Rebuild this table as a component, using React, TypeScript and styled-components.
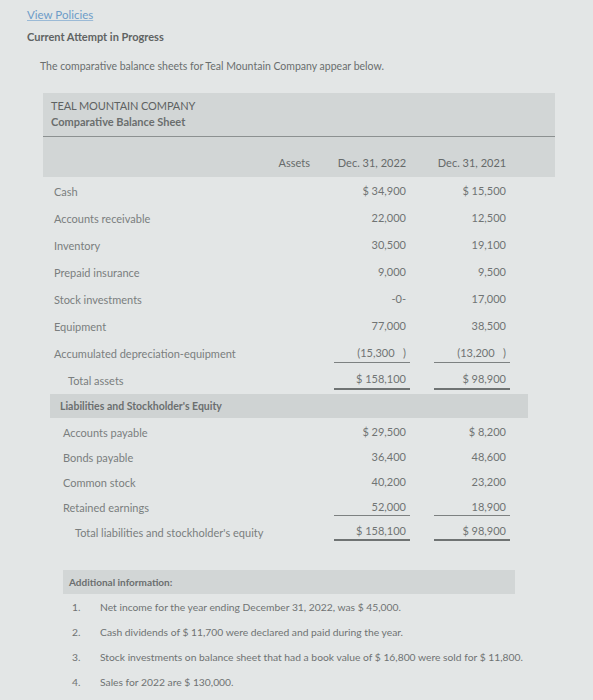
import React, { FC } from 'react'
import styled, { createGlobalStyle } from 'styled-components'

const GlobalStyle = createGlobalStyle`
  html, body {
    margin: 0;
    padding: 0;
    background: #e3e6e6;
  }
  body {
    font-family: Lato, "Open Sans", Arial, sans-serif;
    color: #666a6a;
  }
`

type Line = { label: string; y22: string; y21: string; total?: boolean; rule?: 'single' | 'double' }

const assets: Line[] = [
  { label: 'Cash', y22: '$ 34,900', y21: '$ 15,500' },
  { label: 'Accounts receivable', y22: '22,000', y21: '12,500' },
  { label: 'Inventory', y22: '30,500', y21: '19,100' },
  { label: 'Prepaid insurance', y22: '9,000', y21: '9,500' },
  { label: 'Stock investments', y22: '-0-', y21: '17,000' },
  { label: 'Equipment', y22: '77,000', y21: '38,500' },
  { label: 'Accumulated depreciation-equipment', y22: '(15,300\u00a0\u00a0\u00a0)', y21: '(13,200\u00a0\u00a0\u00a0)', rule: 'single' },
  { label: 'Total assets', y22: '$ 158,100', y21: '$ 98,900', total: true, rule: 'double' },
]

const liabilities: Line[] = [
  { label: 'Accounts payable', y22: '$ 29,500', y21: '$ 8,200' },
  { label: 'Bonds payable', y22: '36,400', y21: '48,600' },
  { label: 'Common stock', y22: '40,200', y21: '23,200' },
  { label: 'Retained earnings', y22: '52,000', y21: '18,900', rule: 'single' },
  { label: "Total liabilities and stockholder's equity", y22: '$ 158,100', y21: '$ 98,900', total: true, rule: 'double' },
]

const notes = [
  'Net income for the year ending December 31, 2022, was $ 45,000.',
  'Cash dividends of $ 11,700 were declared and paid during the year.',
  'Stock investments on balance sheet that had a book value of $ 16,800 were sold for $ 11,800.',
  'Sales for 2022 are $ 130,000.',
]

const App: FC = () => {
  return (
    <Page>
      <GlobalStyle />
      <PolicyLink href="#">View Policies</PolicyLink>
      <AttemptTitle>Current Attempt in Progress</AttemptTitle>
      <Intro>The comparative balance sheets for Teal Mountain Company appear below.</Intro>

      <Sheet>
        <SheetHead>
          <Company>TEAL MOUNTAIN COMPANY</Company>
          <SheetName>Comparative Balance Sheet</SheetName>
        </SheetHead>
        <ColumnHead>
          <span />
          <HeadCell $align="right">Assets</HeadCell>
          <ValueCell><HeadValue>Dec. 31, 2022</HeadValue></ValueCell>
          <ValueCell><HeadValue>Dec. 31, 2021</HeadValue></ValueCell>
        </ColumnHead>

        {assets.map((l) => (
          <Row key={l.label} $height={27}>
            <Label $indent={l.total ? 25 : 11}>{l.label}</Label>
            <span />
            <ValueCell><Value $rule={l.rule}>{l.y22}</Value></ValueCell>
            <ValueCell><Value $rule={l.rule}>{l.y21}</Value></ValueCell>
          </Row>
        ))}

        <SectionBand>Liabilities and Stockholder's Equity</SectionBand>

        {liabilities.map((l) => (
          <Row key={l.label} $height={25}>
            <Label $indent={l.total ? 32 : 20}>{l.label}</Label>
            <span />
            <ValueCell><Value $rule={l.rule}>{l.y22}</Value></ValueCell>
            <ValueCell><Value $rule={l.rule}>{l.y21}</Value></ValueCell>
          </Row>
        ))}
      </Sheet>

      <InfoBand>Additional information:</InfoBand>
      <NoteList>
        {notes.map((n, i) => (
          <Note key={i}>
            <NoteNum>{i + 1}.</NoteNum>
            <span>{n}</span>
          </Note>
        ))}
      </NoteList>
    </Page>
  )
}

export default App

const Page = styled.div`
  width: 593px;
  height: 700px;
  box-sizing: border-box;
  padding: 7px 0 0 27px;
  overflow: hidden;
`

const PolicyLink = styled.a`
  display: block;
  width: max-content;
  font-size: 11.5px;
  line-height: 16px;
  color: #6d9cc8;
  text-decoration: underline;
  text-decoration-color: #9bbad6;
`

const AttemptTitle = styled.div`
  margin-top: 6px;
  font-size: 11px;
  line-height: 16px;
  font-weight: 700;
  color: #5f6363;
`

const Intro = styled.p`
  margin: 13px 0 0 13px;
  font-size: 10.5px;
  line-height: 16px;
  color: #6a6e6e;
`

const Sheet = styled.div`
  margin: 19px 0 0 16px;
  width: 512px;
`

const SheetHead = styled.div`
  background: #d2d6d6;
  padding: 5px 8px 6px 8px;
  border-bottom: 1.5px solid #8c9191;
`

const Company = styled.div`
  font-size: 11px;
  line-height: 16px;
  color: #5e6262;
  letter-spacing: -0.1px;
`

const SheetName = styled.div`
  font-size: 11px;
  line-height: 16px;
  font-weight: 700;
  color: #6a6e6e;
`

const gridCols = `
  display: grid;
  grid-template-columns: minmax(0, 1fr) 64px 96px 100px;
  padding: 0 45px 0 8px;
`

const ColumnHead = styled.div`
  ${gridCols}
  height: 40px;
  align-items: center;
  background: #d2d6d6;
  padding-top: 10px;
  box-sizing: border-box;
`

const HeadCell = styled.div<{ $align?: 'left' | 'right' }>`
  font-size: 11px;
  color: #666a6a;
  text-align: ${(p) => p.$align || 'left'};
  padding-right: 4px;
`

const HeadValue = styled.div`
  width: 76px;
  text-align: center;
  font-size: 11px;
  color: #666a6a;
  white-space: nowrap;
`

const Row = styled.div<{ $height: number }>`
  ${gridCols}
  height: ${(p) => p.$height}px;
`

const Label = styled.div<{ $indent: number }>`
  align-self: center;
  padding-left: ${(p) => p.$indent - 8}px;
  padding-top: 2px;
  font-size: 11px;
  color: #7a7e7e;
  white-space: nowrap;
  overflow: visible;
`

const ValueCell = styled.div`
  display: flex;
  justify-content: flex-end;
  align-items: stretch;
`

const Value = styled.div<{ $rule?: 'single' | 'double' }>`
  width: 76px;
  box-sizing: border-box;
  margin-bottom: 3px;
  padding: 3px 4px 0 0;
  display: flex;
  align-items: center;
  justify-content: flex-end;
  font-size: 11px;
  color: #707474;
  white-space: nowrap;
  border-bottom: ${(p) =>
    p.$rule === 'double' ? '2px solid #6f7373' : p.$rule === 'single' ? '1.5px solid #7d8181' : '0'};
`

const SectionBand = styled.div`
  margin: 1px 27px 1px 7px;
  height: 24px;
  line-height: 24px;
  padding-left: 10px;
  background: #cfd3d3;
  font-size: 10.5px;
  font-weight: 700;
  color: #6b6f6f;
`

const InfoBand = styled.div`
  margin: 26px 0 0 36px;
  width: 452px;
  height: 24px;
  line-height: 24px;
  padding-left: 6px;
  box-sizing: border-box;
  background: #d2d6d6;
  font-size: 10px;
  font-weight: 700;
  color: #6b6f6f;
`

const NoteList = styled.ol`
  list-style: none;
  margin: 0;
  padding: 0 0 0 45px;
`

const Note = styled.li`
  display: flex;
  height: 25px;
  align-items: center;
  font-size: 10.3px;
  color: #6f7373;
  white-space: nowrap;
`

const NoteNum = styled.span`
  width: 28px;
  flex-shrink: 0;
`
